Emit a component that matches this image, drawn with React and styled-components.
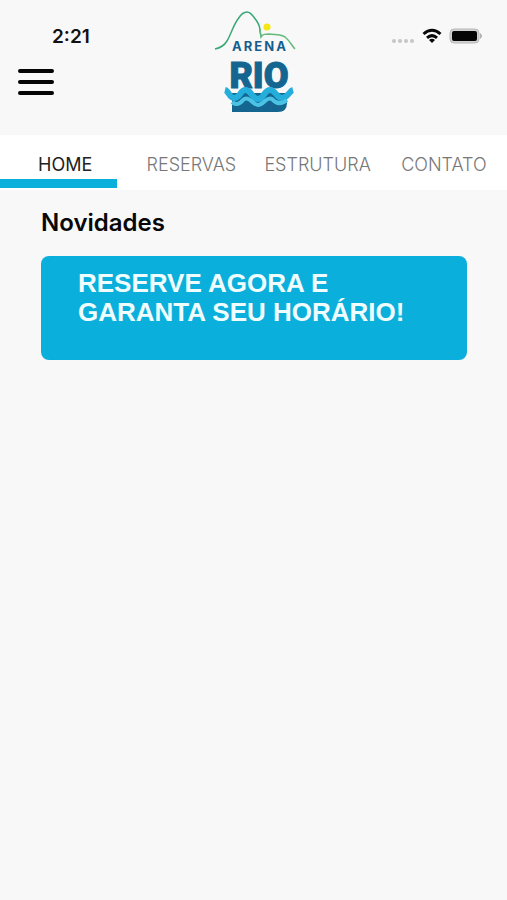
import React from 'react';
import styled, { createGlobalStyle } from 'styled-components';

const GlobalStyle = createGlobalStyle`
body{
margin:0;
background-color:#f8f8f8;
font-family:Inter, "Liberation Sans", sans-serif;
}
`;
const Header = styled.header`
display:grid;
grid-template-columns:1fr auto 1fr;
padding:11px 18px 19px;
`;
const HeaderLeft = styled.div`
display:flex;
flex-direction:column;
align-items:flex-start;
gap:20px;
padding-top:14px;
`;
const Time = styled.time`
padding-left:34px;
font-size:19px;
line-height:24px;
font-weight:600;
color:#111;
`;
const MenuButton = styled.button`
display:flex;
flex-direction:column;
gap:7px;
width:36px;
padding:0;
border:none;
background:none;
cursor:pointer;
`;
const MenuLine = styled.span`
width:100%;
height:4px;
border-radius:2px;
background-color:#050505;
`;
const Status = styled.div`
display:flex;
justify-content:flex-end;
align-items:center;
gap:7px;
height:28px;
padding:11px 6px 0 0;
`;
const Nav = styled.nav`
background-color:#fff;
padding-bottom:2px;
`;
const Tabs = styled.div`
display:grid;
grid-template-columns:repeat(4, 1fr);
padding-left:2px;
`;
const Tab = styled.a`
font-size:18px;
line-height:24px;
padding:18px 0 2px;
font-weight:${props => props.$active ? 400 : 300};
text-align:center;
text-decoration:none;
color:${props => props.$active ? '#222' : '#777'};
`;
const Indicator = styled.div`
width:23%;
height:9px;
background-color:#0aafdb;
`;
const Content = styled.main`
padding:18px 40px 24px 41px;
`;
const Title = styled.h1`
margin:0 0 18px;
font-size:24px;
line-height:30px;
font-weight:600;
color:#080808;
`;
const Banner = styled.a`
display:block;
min-height:78px;
padding:13px 37px;
border-radius:8px;
background-color:#0aafdb;
font-family:"Liberation Sans", Arial, sans-serif;
font-size:26px;
line-height:29px;
font-weight:700;
text-decoration:none;
color:#effdff;
`;

const tabs = ['Home', 'Reservas', 'Estrutura', 'Contato'];

const Logo = () => (
    <svg width="84" height="105" viewBox="-3 0 84 105" role="img" aria-label="Arena Rio">
        <path
            d="M0 38C5 37 9 35 12 30C16 23 18 15 23 8C26 3 29 1 32 1C36 1 38 5 41 9C44 13 45 17 45 20L46 26"
            fill="none" stroke="#38a875" strokeWidth="1.5"
        />
        <path
            d="M45 18L46 26C48 23 50 23 54 23C60 24 65 23 70 26C75 30 77 35 80 38"
            fill="none" stroke="#62bb78" strokeWidth="1.5"
        />
        <circle cx="52" cy="16" r="3.6" fill="#f5e616" />
        <text
            x="45" y="40" textAnchor="middle" fontFamily="Inter, sans-serif"
            fontSize="13" fontWeight="700" letterSpacing="2" fill="#175e8d"
        >ARENA</text>
        <text
            x="44" y="77" textAnchor="middle" fontFamily="Roboto, sans-serif"
            fontSize="36" fontWeight="900" fill="#146590" stroke="#146590" strokeWidth="1"
        >RIO</text>
        <path d="M17 82L72 82V92Q72 101 63 101H17Z" fill="#146590" />
        <path
            d="M10 79C14 80 14 87 19 87C26 87 25 78 31 79C37 80 37 88 43 88C49 88 49 79 55 79C61 79 61 87 67 87C73 87 74 80 78 79"
            fill="none" stroke="#24aedb" strokeWidth="6"
        />
        <path
            d="M17 91C20 94 24 94 28 89C34 84 38 94 43 94C49 94 51 85 57 88C62 94 67 93 72 89"
            fill="none" stroke="#4cc3e4" strokeWidth="4"
        />
    </svg>
);

const StatusIcons = () => (
    <Status>
        <svg width="24" height="16" viewBox="0 0 24 16" fill="#c6c6c6" aria-hidden="true">
            <circle cx="3" cy="13" r="2" />
            <circle cx="9" cy="13" r="2" />
            <circle cx="15" cy="13" r="2" />
            <circle cx="21" cy="13" r="2" />
        </svg>
        <svg width="20" height="16" viewBox="0 0 20 16" fill="none" stroke="#080808" strokeWidth="3" aria-hidden="true">
            <path d="M1.5 6Q10 -1.5 18.5 6" />
            <path d="M5 9.8Q10 5.5 15 9.8" />
            <path d="M7 12Q10 9.6 13 12L10 15Z" fill="#080808" stroke="none" />
        </svg>
        <svg width="34" height="16" viewBox="0 0 34 16" aria-hidden="true">
            <rect x="1" y="1" width="29" height="14" rx="4" fill="#d2d2d2" stroke="#b8b8b8" />
            <rect x="3" y="3" width="25" height="10" rx="2" fill="#050505" />
            <path d="M31 5Q35 8 31 11Z" fill="#b0b0b0" />
        </svg>
    </Status>
);

const App = () => {
    return (
        <>
            <GlobalStyle />
            <Header>
                <HeaderLeft>
                    <Time>2:21</Time>
                    <MenuButton type="button" aria-label="Menu">
                        <MenuLine />
                        <MenuLine />
                        <MenuLine />
                    </MenuButton>
                </HeaderLeft>
                <Logo />
                <StatusIcons />
            </Header>
            <Nav>
                <Tabs>
                    {tabs.map((tab, index) => (
                        <Tab key={tab} href={`#${tab.toLowerCase()}`} $active={index === 0}>
                            {tab.toUpperCase()}
                        </Tab>
                    ))}
                </Tabs>
                <Indicator />
            </Nav>
            <Content>
                <Title>Novidades</Title>
                <Banner href="#reservas">
                    RESERVE AGORA E<br />
                    GARANTA SEU HORÁRIO!
                </Banner>
            </Content>
        </>
    );
};

export default App;
